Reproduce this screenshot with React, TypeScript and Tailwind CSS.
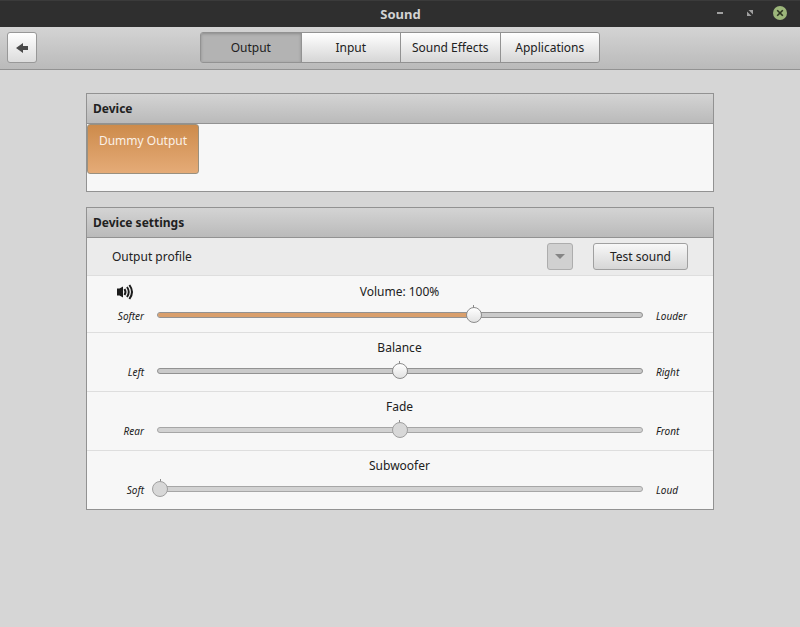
import { useState } from 'react';
import type { ReactNode } from 'react';
import clsx from 'clsx';

interface SliderRowProps {
  title: string;
  low: string;
  high: string;
  value: number;
  max: number;
  mark: number;
  filled?: boolean;
  disabled?: boolean;
  icon?: ReactNode;
  className?: string;
  onChange: (value: number) => void;
}

const TABS = ['Output', 'Input', 'Sound Effects', 'Applications'];

function VolumeIcon() {
  return (
    <svg width="17" height="16" viewBox="0 0 17 16" fill="none" aria-hidden="true">
      <path d="M0 4.500h2.500L6 2.500v11l-3.500-2H0z" fill="#1c1c1c" />
      <path d="M7.500 5q2 3 0 6" stroke="#1c1c1c" strokeWidth="2" />
      <path d="M10 3q3.500 5 0 10" stroke="#1c1c1c" strokeWidth="1.900" />
      <path d="M12.400 1q5.200 7 0 14" stroke="#1c1c1c" strokeWidth="2" />
    </svg>
  );
}

function SliderRow({ title, low, high, value, max, mark, filled, disabled, icon, className, onChange }: SliderRowProps) {
  const id = `slider-${title.toLowerCase()}`;

  return (
    <div className={clsx('px-[25px]', className)}>
      <div className="grid grid-cols-[33px_1fr_34px] items-center h-5">
        <div className="pl-[5px]">{icon}</div>
        <label htmlFor={id} className="px-2 text-center">
          {title === 'Volume' ? `Volume: ${value}%` : title}
        </label>
      </div>
      <div className="grid grid-cols-[33px_1fr_33px] items-center h-[26px] text-[10px] italic">
        <span className="pt-[2px] pr-px text-right">{low}</span>
        <div className="grid items-center mx-[7px] h-[26px]">
          {/* default position mark */}
          <div className="[grid-area:1/1] self-start mx-2 pt-[3px]">
            <div className="h-[3px] border-r border-[#8a8a8a]" style={{ width: `${(mark / max) * 100}%` }} />
          </div>
          <div
            className={clsx(
              '[grid-area:1/1] mx-[5px] h-[6px] rounded-full border overflow-hidden',
              disabled ? 'bg-[#d2d2d2] border-[#a6a6a6]' : 'bg-[#cacaca] border-[#929292]'
            )}
          >
            {filled && <div className="h-full bg-[#d99f6c]" style={{ width: `${(value / max) * 100}%` }} />}
          </div>
          <input
            id={id}
            type="range"
            min={0}
            max={max}
            value={value}
            disabled={disabled}
            onChange={(e) => onChange(Number(e.target.value))}
            className={clsx(
              '[grid-area:1/1] w-full h-4 m-0 appearance-none bg-transparent',
              '[&::-webkit-slider-thumb]:appearance-none [&::-webkit-slider-thumb]:size-4 [&::-webkit-slider-thumb]:rounded-full [&::-webkit-slider-thumb]:border',
              disabled
                ? '[&::-webkit-slider-thumb]:border-[#a0a0a0] [&::-webkit-slider-thumb]:bg-[#d8d8d8]'
                : '[&::-webkit-slider-thumb]:border-[#8c8c8c] [&::-webkit-slider-thumb]:bg-linear-to-b [&::-webkit-slider-thumb]:from-white [&::-webkit-slider-thumb]:to-[#e2e2e2]'
            )}
          />
        </div>
        <span className="pt-[2px] pl-px whitespace-nowrap">{high}</span>
      </div>
    </div>
  );
}

function Section({ title, children }: { title: string; children: ReactNode }) {
  return (
    <section className="border border-[#929292] bg-[#f7f7f7]">
      <h2 className="h-[30px] px-[6px] leading-[29px] font-bold border-b border-[#929292] bg-linear-to-b from-[#d4d4d4] to-[#bababa]">
        {title}
      </h2>
      {children}
    </section>
  );
}

export default function App() {
  const [tab, setTab] = useState('Output');
  const [volume, setVolume] = useState(100);
  const [balance, setBalance] = useState(50);
  const [fade, setFade] = useState(50);
  const [subwoofer, setSubwoofer] = useState(0);

  return (
    <div className="min-h-screen bg-[#d6d6d6] text-[12px] text-[#212121] font-['Noto_Sans',sans-serif]">
      <header className="grid grid-cols-[1fr_auto_1fr] h-[27px] px-[13px] bg-[#2f2f2f] shadow-[inset_0_1px_#3b3b3b]">
        <h1 className="col-start-2 pl-px leading-[29px] text-[13px] font-bold text-[#d3d3d3]">Sound</h1>
        <div className="flex items-start justify-end gap-[16px] pt-[6px]">
          <button aria-label="Minimize" className="flex size-[14px] items-center justify-center">
            <svg width="14" height="14" viewBox="0 0 14 14">
              <path d="M4 6h6v2H4z" fill="#a0a0a0" />
            </svg>
          </button>
          <button aria-label="Maximize" className="flex size-[14px] items-center justify-center">
            <svg width="14" height="14" viewBox="0 0 14 14" fill="#a0a0a0">
              <path d="M5.500 4H10v4.500z" />
              <path d="M4 5.500V10h4.500z" />
            </svg>
          </button>
          <button aria-label="Close" className="flex size-[14px] items-center justify-center rounded-full bg-[#9cb67a]">
            <svg width="14" height="14" viewBox="0 0 14 14">
              <path d="M4.200 4.200l5.600 5.600M9.800 4.200l-5.600 5.600" stroke="#2b3320" strokeWidth="1.600" />
            </svg>
          </button>
        </div>
      </header>

      <nav className="grid grid-cols-[1fr_auto_1fr] h-[43px] px-[7px] pt-[5px] pb-[6px] border-b border-[#929292] bg-linear-to-b from-[#d4d4d4] to-[#bababa]">
        <button
          aria-label="Back"
          className="flex w-[30px] items-center justify-center rounded-[3px] border border-[#989898] bg-linear-to-b from-white to-[#dcdcdc]"
        >
          <svg width="12" height="10" viewBox="0 0 12 10">
            <path d="M0 5l7-5v3h5v4H7v3z" fill="#4a4a4a" />
          </svg>
        </button>
        <div className="grid grid-cols-4 w-[400px] rounded-[3px] border border-[#929292] overflow-hidden">
          {TABS.map((name) => (
            <button
              key={name}
              onClick={() => setTab(name)}
              className={clsx(
                'border-l border-[#929292] first:border-l-0',
                name === tab
                  ? 'bg-[#b3b3b3] shadow-[inset_0_1px_3px_#8c8c8c]'
                  : 'bg-linear-to-b from-white to-[#d6d6d6]'
              )}
            >
              {name}
            </button>
          ))}
        </div>
      </nav>

      <main className="flex flex-col gap-[15px] px-[86px] pt-[23px]">
        <Section title="Device">
          <div className="h-[67px]">
            <button className="flex h-[50px] w-[112px] justify-center rounded-[3px] border border-[#99907f] bg-linear-to-b from-[#cd8b4b] to-[#e5ab77] pt-[7px] text-[#fbf1e7]">
              Dummy Output
            </button>
          </div>
        </Section>

        <Section title="Device settings">
          <div className="flex items-center h-[38px] px-[25px] bg-[#ebebeb] border-b border-[#dedede]">
            <label htmlFor="profile" className="flex-1">
              Output profile
            </label>
            <div className="grid items-center">
              <select
                id="profile"
                disabled
                className="[grid-area:1/1] h-[27px] w-[26px] appearance-none rounded-[3px] border border-[#adadad] bg-[#d0d0d0]"
              />
              <svg width="10" height="5" viewBox="0 0 10 5" className="[grid-area:1/1] justify-self-center pointer-events-none">
                <path d="M0 0h10L5 5z" fill="#858585" />
              </svg>
            </div>
            <button className="ml-5 h-[27px] w-[95px] rounded-[3px] border border-[#a0a0a0] bg-linear-to-b from-[#f8f8f8] to-[#d6d6d6]">
              Test sound
            </button>
          </div>
          <SliderRow
            title="Volume"
            low="Softer"
            high="Louder"
            value={volume}
            max={153}
            mark={100}
            filled
            icon={<VolumeIcon />}
            onChange={setVolume}
            className="pt-[6px] pb-1 border-b border-[#dedede]"
          />
          <SliderRow
            title="Balance"
            low="Left"
            high="Right"
            value={balance}
            max={100}
            mark={50}
            onChange={setBalance}
            className="pt-[5px] pb-[7px] border-b border-[#dedede]"
          />
          <SliderRow
            title="Fade"
            low="Rear"
            high="Front"
            value={fade}
            max={100}
            mark={50}
            disabled
            onChange={setFade}
            className="pt-[5px] pb-[7px] border-b border-[#dedede]"
          />
          <SliderRow
            title="Subwoofer"
            low="Soft"
            high="Loud"
            value={subwoofer}
            max={100}
            mark={0}
            disabled
            onChange={setSubwoofer}
            className="pt-[5px] pb-[7px]"
          />
        </Section>
      </main>
    </div>
  );
}
